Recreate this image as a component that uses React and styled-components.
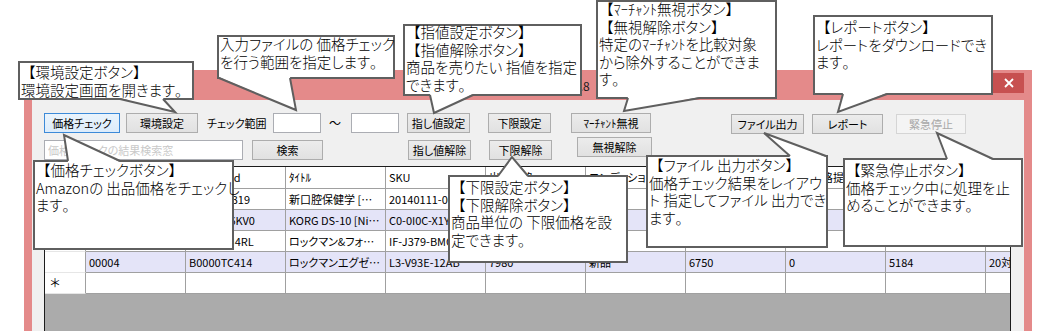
import React from "react";
import styled, { createGlobalStyle } from "styled-components";

const UI_FONT = `"Noto Sans CJK JP", "Noto Sans", sans-serif`;

const GlobalStyle = createGlobalStyle`
  html, body {
    margin: 0;
    padding: 0;
    background: #fff;
    overflow: hidden;
  }
  * {
    box-sizing: border-box;
  }
`;

const COLUMNS = ["No", "AmazonId", "ﾀｲﾄﾙ", "SKU", "出品価格", "コンディション", "最安値", "自動価格提案", "下限価格", "コメント"];

const ROWS = [
  ["00001", "4263456319", "新口腔保健学 [大型本]", "20140111-0001", "3240", "新品", "3500", "0", "2800", "対象"],
  ["00002", "B000UR6KV0", "KORG DS-10 [Nintendo DS]", "C0-0I0C-X1Y2", "12800", "中古", "11800", "0", "9800", "対象"],
  ["00003", "B00005N4RL", "ロックマン&フォルテ ワンダースワン", "IF-J379-BMQ0", "4980", "新品", "4500", "0", "3600", "対象"],
  ["00004", "B0000TC414", "ロックマンエグゼ4トーナメント", "L3-V93E-12AB", "7980", "新品", "6750", "0", "5184", "20対象外"],
];

const CALLOUTS = [
  { x: 18, y: 61, w: 176, h: 39, mt: 0, lines: ["【環境設定ボタン】", "環境設定画面を開きます。"], tail: { side: "bottom", base: [120, 163], apex: [175, 112] } },
  { x: 217, y: 35, w: 178, h: 44, mt: -2, lines: ["入力ファイルの 価格チェック", "を行う範囲を指定します。"], tail: { side: "bottom", base: [219, 290], apex: [296, 110] } },
  { x: 403, y: 24, w: 179, h: 72, mt: -3, lines: ["【指値設定ボタン】", "【指値解除ボタン】", "商品を売りたい 指値を指定", "できます。"], tail: { side: "bottom", base: [430, 473], apex: [434, 113] } },
  { x: 596, y: 0, w: 181, h: 99, mt: -2, lines: ["【ﾏｰﾁｬﾝﾄ無視ボタン】", "【無視解除ボタン】", "特定のﾏｰﾁｬﾝﾄを比較対象", "から除外することができま", "す。"], tail: { side: "bottom", base: [628, 700], apex: [624, 111] } },
  { x: 813, y: 15, w: 180, h: 80, mt: 1, lines: ["【レポートボタン】", "レポートをダウンロードでき", "ます。"], tail: { side: "bottom", base: [843, 887], apex: [838, 112] } },
  { x: 33, y: 160, w: 201, h: 90, mt: -1, lines: ["【価格チェックボタン】", "Amazonの 出品価格をチェックし", "ます。"], tail: { side: "top", base: [68, 120], apex: [64, 135] } },
  { x: 448, y: 175, w: 180, h: 88, mt: 1, lines: ["【下限設定ボタン】", "【下限解除ボタン】", "商品単位の 下限価格を設", "定できます。"], tail: { side: "top", base: [498, 528], apex: [512, 157] } },
  { x: 646, y: 155, w: 182, h: 93, mt: -1, lines: ["【ファイル 出力ボタン】", "価格チェック結果をレイアウ", "ト 指定してファイル 出力でき", "ます。"], tail: { side: "top", base: [790, 826], apex: [764, 133] } },
  { x: 843, y: 158, w: 180, h: 89, mt: 1, lines: ["【緊急停止ボタン】", "価格チェック中に処理を止", "めることができます。"], tail: { side: "top", base: [947, 993], apex: [937, 133] } },
];

// keep brackets and the full stop at full width, kana go proportional
const renderLine = (text) =>
  text
    .split(/([【】。])/)
    .filter(Boolean)
    .map((part, i) =>
      /^[【】。]$/.test(part) ? <Punct key={i}>{part}</Punct> : <React.Fragment key={i}>{part}</React.Fragment>
    );

const Tail = ({ box, tail }) => {
  const [x1, x2] = tail.base;
  const [ax, ay] = tail.apex;
  const top = tail.side === "top";
  const edge = top ? box.y : box.y + box.h;
  const inner = top ? edge + 2 : edge - 2;
  const mid = top ? edge + 1 : edge - 1;
  const p = (x, y) => `${x - box.x},${y - box.y}`;
  return (
    <TailSvg width="1" height="1">
      <polygon points={`${p(x1, inner)} ${p(ax, ay)} ${p(x2, inner)}`} fill="#fff" />
      <polyline
        points={`${p(x1, mid)} ${p(ax, ay)} ${p(x2, mid)}`}
        fill="none"
        stroke="#5f5f5f"
        strokeWidth="2"
      />
    </TailSvg>
  );
};

const App = () => {
  return (
    <>
      <GlobalStyle />
      <Page>
        <Window>
          <TitleBar>
            <TitleText>価格チェッカー Ver1.0.8</TitleText>
            <CloseButton>
              <svg width="10" height="10" viewBox="0 0 10 10">
                <path d="M1 1 L9 9 M9 1 L1 9" stroke="#fff" strokeWidth="1.8" />
              </svg>
            </CloseButton>
          </TitleBar>
          <Client>
            <ToolRow>
              <Btn $w={76} $primary>価格チェック</Btn>
              <Btn $w={72} $ml={6}>環境設定</Btn>
              <RangeLabel>チェック範囲</RangeLabel>
              <TextBox $w={48} $ml={10} />
              <Tilde>～</Tilde>
              <TextBox $w={48} $ml={10} />
              <Btn $w={63} $ml={8}>指し値設定</Btn>
              <Btn $w={63} $ml={18}>下限設定</Btn>
              <Btn $w={80} $ml={20}>ﾏｰﾁｬﾝﾄ無視</Btn>
              <Btn $w={73} $ml={80} $dy={1}>ファイル出力</Btn>
              <Btn $w={71} $ml={8} $dy={1}>レポート</Btn>
              <Btn $w={70} $ml={13} $dy={1} disabled>緊急停止</Btn>
            </ToolRow>
            <ToolRow $mt={7}>
              <TextBox $w={199} placeholder="価格チェックの結果検索窓" />
              <Btn $w={71} $ml={9}>検索</Btn>
              <Btn $w={63} $ml={85}>指し値解除</Btn>
              <Btn $w={63} $ml={18}>下限解除</Btn>
              <Btn $w={75} $ml={25} $dy={-3}>無視解除</Btn>
            </ToolRow>
            <Grid>
              <GridRow $header>
                <RowHead $header />
                {COLUMNS.map((c) => (
                  <Cell key={c} $header>{c}</Cell>
                ))}
              </GridRow>
              {ROWS.map((row, r) => (
                <GridRow key={r} $alt={r % 2 === 1}>
                  <RowHead />
                  {row.map((v, i) => (
                    <Cell key={i}>{v}</Cell>
                  ))}
                </GridRow>
              ))}
              <GridRow>
                <RowHead>＊</RowHead>
                {COLUMNS.map((c) => (
                  <Cell key={c} />
                ))}
              </GridRow>
            </Grid>
          </Client>
        </Window>

        {CALLOUTS.map((c, i) => (
          <Callout key={i} $x={c.x} $y={c.y} $w={c.w} $h={c.h}>
            <CalloutText $mt={c.mt}>
              {c.lines.map((l, j) => (
                <Line key={j}>{renderLine(l)}</Line>
              ))}
            </CalloutText>
            <Tail box={c} tail={c.tail} />
          </Callout>
        ))}
      </Page>
    </>
  );
};

export default App;

const Page = styled.div`
  position: relative;
  width: 1039px;
  height: 331px;
  padding: 70px 0 0 24px;
  background: #fff;
  overflow: hidden;
`;

const Window = styled.div`
  display: flex;
  flex-direction: column;
  width: 1008px;
  height: 261px;
  background: #e48a8a;
`;

const TitleBar = styled.div`
  display: grid;
  grid-template-columns: 1fr auto 1fr;
  align-items: center;
  height: 30px;
  flex-shrink: 0;
`;

const TitleText = styled.div`
  grid-column: 2;
  padding-right: 8px;
  font: 12px ${UI_FONT};
  color: #1a1a1a;
`;

const CloseButton = styled.div`
  grid-column: 3;
  justify-self: end;
  align-self: start;
  display: flex;
  align-items: center;
  justify-content: center;
  width: 31px;
  height: 20px;
  margin: 3px 8px 0 0;
  background: #c75050;
`;

const Client = styled.div`
  display: flex;
  flex-direction: column;
  flex: 1;
  min-height: 0;
  margin: 0 8px;
  padding: 13px 0 0 12px;
  background: #f0f0f0;
  overflow: hidden;
`;

const ToolRow = styled.div`
  display: flex;
  align-items: flex-start;
  height: 20px;
  margin-top: ${(p) => p.$mt || 0}px;
`;

const Btn = styled.button`
  flex-shrink: 0;
  width: ${(p) => p.$w}px;
  height: 20px;
  margin: ${(p) => p.$dy || 0}px 0 0 ${(p) => p.$ml || 0}px;
  padding: 0;
  border: 1px solid ${(p) => (p.$primary ? "#3c8ad8" : p.disabled ? "#d5d5d5" : "#adadad")};
  background: ${(p) =>
    p.$primary
      ? "linear-gradient(#eaf4fc, #dcecfb)"
      : p.disabled
      ? "#f4f4f4"
      : "linear-gradient(#ececec, #e1e1e1)"};
  color: ${(p) => (p.disabled ? "#a8a8a8" : "#000")};
  font: 11px ${UI_FONT};
  font-feature-settings: "palt";
  line-height: 18px;
`;

const TextBox = styled.input`
  flex-shrink: 0;
  width: ${(p) => p.$w}px;
  height: 20px;
  margin: 0 0 0 ${(p) => p.$ml || 0}px;
  padding: 0 3px;
  border: 1px solid #abadb3;
  background: #fff;
  font: 11px ${UI_FONT};
  font-feature-settings: "palt";
  outline: none;

  &::placeholder {
    color: #c9c9c9;
  }
`;

const RangeLabel = styled.span`
  flex-shrink: 0;
  width: 56px;
  margin-left: 9px;
  font: 11px/20px ${UI_FONT};
  font-feature-settings: "palt";
  color: #000;
  white-space: nowrap;
`;

const Tilde = styled.span`
  flex-shrink: 0;
  width: 12px;
  margin-left: 8px;
  font: 12px/20px ${UI_FONT};
  color: #000;
  text-align: center;
`;

const Grid = styled.div`
  flex: 1;
  width: 967px;
  margin-top: 6px;
  border: 1px solid #1c1c1c;
  border-bottom: none;
  background: #ababab;
  overflow: hidden;
`;

const GridRow = styled.div`
  display: grid;
  grid-template-columns: 41px repeat(10, 100px);
  width: 1041px;
  height: ${(p) => (p.$header ? 22 : 21)}px;
  background: ${(p) => (p.$alt ? "#e4e4f8" : "#fff")};
`;

const Cell = styled.div`
  padding: 0 3px;
  border-right: 1px solid #a0a0a0;
  border-bottom: 1px solid #a0a0a0;
  font: 11px/20px ${UI_FONT};
  font-feature-settings: "palt";
  color: #000;
  line-height: ${(p) => (p.$header ? 21 : 20)}px;
  white-space: nowrap;
  overflow: hidden;
  text-overflow: ellipsis;
`;

const RowHead = styled(Cell)`
  padding-left: 5px;
  background: #fff;
  border-bottom-color: ${(p) => (p.$header ? "#a0a0a0" : "#e6e6e6")};
  font-size: 12px;
`;

const Callout = styled.div`
  position: absolute;
  left: ${(p) => p.$x}px;
  top: ${(p) => p.$y}px;
  width: ${(p) => p.$w}px;
  height: ${(p) => p.$h}px;
  padding: 0 1px;
  border: 2px solid #5f5f5f;
  background: #fff;
`;

const CalloutText = styled.div`
  margin-top: ${(p) => p.$mt}px;
  font: 300 14.5px ${UI_FONT};
  font-feature-settings: "palt";
  color: #000;
`;

const Line = styled.div`
  height: 17.5px;
  line-height: 17.5px;
  white-space: nowrap;
`;

const Punct = styled.span`
  font-feature-settings: normal;
`;

const TailSvg = styled.svg`
  position: absolute;
  left: -2px;
  top: -2px;
  overflow: visible;
  pointer-events: none;
`;
